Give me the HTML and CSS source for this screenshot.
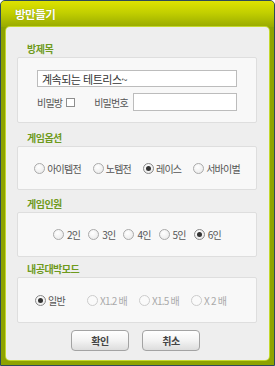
FILE: index.html
```html
<!DOCTYPE html>
<html lang="ko">
<head>
    <meta charset="UTF-8">
    <title>방만들기</title>
    <link rel="stylesheet" href="styles.css">
</head>
<body>
    <div class="window">
        <div class="titlebar">방만들기</div>
        <div class="panel">
            <div class="label">방제목</div>
            <div class="box room">
                <input type="text" class="field title-field" value="계속되는 테트리스~">
                <div class="row">
                    <span class="txt">비밀방</span>
                    <input type="checkbox" class="check">
                    <span class="txt pw">비밀번호</span>
                    <input type="text" class="field pw-field">
                </div>
            </div>

            <div class="label">게임옵션</div>
            <div class="box opts">
                <label class="radio"><input type="radio" name="opt"><span>아이템전</span></label>
                <label class="radio"><input type="radio" name="opt"><span>노템전</span></label>
                <label class="radio"><input type="radio" name="opt" checked><span>레이스</span></label>
                <label class="radio"><input type="radio" name="opt"><span>서바이벌</span></label>
            </div>

            <div class="label">게임인원</div>
            <div class="box players">
                <label class="radio"><input type="radio" name="ppl"><span>2인</span></label>
                <label class="radio"><input type="radio" name="ppl"><span>3인</span></label>
                <label class="radio"><input type="radio" name="ppl"><span>4인</span></label>
                <label class="radio"><input type="radio" name="ppl"><span>5인</span></label>
                <label class="radio"><input type="radio" name="ppl" checked><span>6인</span></label>
            </div>

            <div class="label">내공대박모드</div>
            <div class="box mode">
                <label class="radio"><input type="radio" name="mode" checked><span>일반</span></label>
                <label class="radio off"><input type="radio" name="mode" disabled><span>X1.2 배</span></label>
                <label class="radio off"><input type="radio" name="mode" disabled><span>X1.5 배</span></label>
                <label class="radio off"><input type="radio" name="mode" disabled><span>X 2 배</span></label>
            </div>

            <div class="buttons">
                <button class="btn">확인</button>
                <button class="btn cancel">취소</button>
            </div>
        </div>
    </div>
</body>
</html>
```

FILE: styles.css
```css
body {
    margin: 0;
    background: #ffffff;
    font-family: 'Noto Sans CJK KR', 'Noto Sans', sans-serif;
}
.window {
    width: 275px;
    height: 366px;
    box-sizing: border-box;
    border: 1px solid #2d4a5a;
    border-radius: 5px 5px 0 0;
    background: #8ea300;
    padding: 0 5px 5px 5px;
    display: flex;
    flex-direction: column;
}
.titlebar {
    height: 26px;
    margin: 0 -5px;
    padding-left: 14px;
    line-height: 26px;
    color: #ffffff;
    font-size: 11.5px;
    font-weight: bold;
    letter-spacing: -0.5px;
    border-radius: 4px 4px 0 0;
    background: linear-gradient(#dee200, #c2cf00 45%, #98aa00);
    text-shadow: 0 0 1px #7a8a00;
}
.panel {
    flex: 1;
    background: #eeeeee;
    border-radius: 4px;
    box-shadow: 0 0 0 1px #c4d92e;
    padding: 14px 12px 0 11px;
}
.label {
    height: 15px;
    line-height: 15px;
    margin: 0 0 1px 10px;
    font-size: 10px;
    font-weight: bold;
    color: #6e9a1c;
    letter-spacing: -0.5px;
}
.box {
    background: #f8f8f8;
    border: 1px solid #dedede;
    border-radius: 2px;
    margin-bottom: 6px;
    font-size: 10px;
    color: #555;
    letter-spacing: -0.8px;
}
.room {
    height: 66px;
    box-sizing: border-box;
    padding: 12px 19px 0 19px;
    margin-bottom: 7px;
}
.field {
    box-sizing: border-box;
    height: 17px;
    border: 1px solid #bcbcbc;
    background: #fff;
    margin: 0;
    padding: 0 4px;
    font-family: inherit;
    font-size: 11px;
    color: #333;
    letter-spacing: -0.5px;
    outline: none;
}
.title-field { width: 200px; display: block; }
.row {
    display: flex;
    align-items: center;
    margin-top: 6px;
    height: 18px;
}
.check {
    appearance: none;
    width: 9px;
    height: 9px;
    margin: 0 0 0 4px;
    border: 1px solid #8e8e8e;
    background: #fff;
}
.pw { margin-left: 19px; }
.pw-field { width: 104px; height: 18px; margin-left: auto; }
.opts, .players, .mode {
    height: 44px;
    box-sizing: border-box;
    display: flex;
    align-items: center;
}
.opts { justify-content: center; gap: 12px; }
.players { justify-content: center; gap: 8px; height: 45px; margin-bottom: 4px; }
.mode { padding-left: 17px; height: 46px; margin-bottom: 7px; }
.mode .radio { width: 52px; }
.radio {
    display: flex;
    align-items: center;
    gap: 2px;
}
.radio input {
    appearance: none;
    width: 11px;
    height: 11px;
    margin: 0;
    border: 1px solid #aaaaaa;
    border-radius: 50%;
    background: radial-gradient(circle at 40% 35%, #ffffff, #e6e6e6);
    position: relative;
}
.radio input:checked { border-color: #888888; }
.radio input:checked::after {
    content: "";
    position: absolute;
    left: 2px;
    top: 2px;
    width: 5px;
    height: 5px;
    border-radius: 50%;
    background: #333;
}
.players .radio { gap: 3px; }
.radio.off { color: #aaaaaa; }
.radio.off input { border-color: #cccccc; background: #fafafa; }
.buttons {
    display: flex;
    justify-content: center;
    gap: 13px;
    padding-right: 3px;
}
.btn {
    width: 58px;
    height: 21px;
    border: 1px solid #a3a3a3;
    border-radius: 4px;
    background: linear-gradient(#ffffff, #f3f3f3 50%, #dddddd);
    font-family: inherit;
    font-size: 10px;
    font-weight: bold;
    color: #444;
    padding: 0;
    letter-spacing: -0.5px;
}
```
